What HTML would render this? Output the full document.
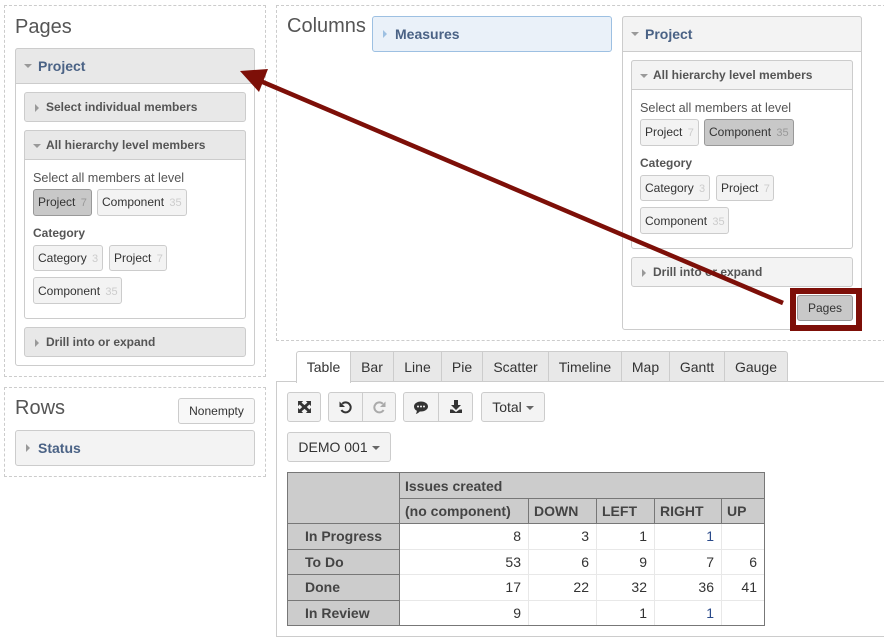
<!DOCTYPE html>
<html><head><meta charset="utf-8"><style>
html,body{margin:0;padding:0;background:#fff}
#p{position:relative;width:884px;height:642px;overflow:hidden;background:#fff;font-family:"Liberation Sans",sans-serif;font-size:12px;color:#333}
#p div{position:absolute;box-sizing:border-box;white-space:nowrap}
.d{border:1px dashed #ccc}
.h{font-size:20px;color:#555;line-height:26px}
.b{border:1px solid #ccc;border-radius:3px;background:#f3f3f3;text-align:left;padding-left:4px;color:#333;font-size:12px;line-height:24px}
.b i{font-style:normal;color:#ccc;font-size:11px;margin-left:2px}
.s{background:#c8c8c8;border-color:#999}
.s i{color:#999}
.box{border:1px solid #ccc;border-radius:3px;background:#fff}
.hd{border:1px solid #ccc;border-radius:3px;background:#e8e8e8;font-weight:bold;color:#555;font-size:12px;line-height:29px;padding-left:21px}
.top{border-radius:3px 3px 0 0}
.lt{background:#f3f3f3}
.blue{font-size:14px;color:#4a6285;padding-left:22px;line-height:35px}
.tr{width:0;height:0;border-style:solid;border-color:transparent}
.dn{border-width:4px 4px 0 4px;border-top-color:#999}
.rt{border-width:4px 0 4px 4px;border-left-color:#999}
.t{font-size:12.65px;color:#555;line-height:16px}
.lb{font-size:12px;font-weight:bold;color:#555;line-height:16px}
.tab{top:351px;height:31px;border:1px solid #ccc;border-left:0;background:#e8e8e8;font-size:14px;color:#333;text-align:center;line-height:31px}
.tb{border:1px solid #ccc;background:#f3f3f3;height:30px;font-size:14px;color:#333;line-height:28px;text-align:center}
.car{display:inline-block;width:0;height:0;border:4px solid transparent;border-top-color:#666;border-bottom:0;vertical-align:2px;margin-left:4px}
.c{background:#ccc;font-weight:bold;font-size:14px;color:#444;line-height:25px;padding-left:5px}
.n{font-size:14px;color:#333;text-align:right;line-height:25px;padding-right:7px}
</style></head><body><div id="p">

<!-- dashed panels -->
<div class="d" style="left:4px;top:5px;width:262px;height:372px"></div>
<div class="d" style="left:4px;top:387px;width:262px;height:90px"></div>
<div class="d" style="left:276px;top:5px;width:620px;height:336px"></div>

<!-- Pages -->
<div class="h" style="left:15px;top:14px">Pages</div>
<div class="box" style="left:15px;top:48px;width:240px;height:318px"></div>
<div class="hd top blue" style="left:15px;top:48px;width:240px;height:36px">Project</div>
<div class="tr dn" style="left:24px;top:64px"></div>
<div class="hd" style="left:24px;top:92px;width:222px;height:30px">Select individual members</div>
<div class="tr rt" style="left:35px;top:104px"></div>
<div class="box" style="left:24px;top:130px;width:222px;height:189px"></div>
<div class="hd top" style="left:24px;top:130px;width:222px;height:30px">All hierarchy level members</div>
<div class="tr dn" style="left:33px;top:144px"></div>
<div class="t" style="left:33px;top:170px">Select all members at level</div>
<div class="b s" style="left:33px;top:189px;width:59px;height:27px">Project <i>7</i></div>
<div class="b" style="left:97px;top:189px;width:90px;height:27px">Component <i>35</i></div>
<div class="lb" style="left:33px;top:225px">Category</div>
<div class="b" style="left:33px;top:245px;width:70px;height:26px">Category <i>3</i></div>
<div class="b" style="left:109px;top:245px;width:58px;height:26px">Project <i>7</i></div>
<div class="b" style="left:33px;top:277px;width:89px;height:27px;line-height:26px">Component <i>35</i></div>
<div class="hd" style="left:24px;top:327px;width:222px;height:30px">Drill into or expand</div>
<div class="tr rt" style="left:35px;top:339px"></div>

<!-- Rows -->
<div class="h" style="left:15px;top:395px">Rows</div>
<div class="b" style="left:178px;top:398px;width:77px;height:26px;text-align:center;padding:0;background:#f8f8f8">Nonempty</div>
<div class="hd lt blue" style="left:15px;top:430px;width:240px;height:36px">Status</div>
<div class="tr rt" style="left:26px;top:444px"></div>

<!-- Columns -->
<div class="h" style="left:287px;top:13px">Columns</div>
<div class="hd blue" style="left:372px;top:16px;width:240px;height:36px;background:#eaf1f9;border-color:#9dc0e2">Measures</div>
<div class="tr rt" style="left:383px;top:30px;border-left-color:#9dc0e2"></div>

<div class="box" style="left:622px;top:16px;width:240px;height:314px"></div>
<div class="hd top lt blue" style="left:622px;top:16px;width:240px;height:36px">Project</div>
<div class="tr dn" style="left:631px;top:32px"></div>
<div class="box" style="left:631px;top:60px;width:222px;height:189px"></div>
<div class="hd top lt" style="left:631px;top:60px;width:222px;height:30px">All hierarchy level members</div>
<div class="tr dn" style="left:640px;top:74px"></div>
<div class="t" style="left:640px;top:100px">Select all members at level</div>
<div class="b" style="left:640px;top:119px;width:59px;height:27px">Project <i>7</i></div>
<div class="b s" style="left:704px;top:119px;width:90px;height:27px">Component <i>35</i></div>
<div class="lb" style="left:640px;top:155px">Category</div>
<div class="b" style="left:640px;top:175px;width:70px;height:26px">Category <i>3</i></div>
<div class="b" style="left:716px;top:175px;width:58px;height:26px">Project <i>7</i></div>
<div class="b" style="left:640px;top:207px;width:89px;height:27px;line-height:26px">Component <i>35</i></div>
<div class="hd lt" style="left:631px;top:257px;width:222px;height:30px">Drill into or expand</div>
<div class="tr rt" style="left:642px;top:269px"></div>
<div class="b s" style="left:797px;top:295px;width:56px;height:26px;text-align:center;padding:0;background:#c8c8c8">Pages</div>
<div style="left:790px;top:288px;width:72px;height:43px;border:6px solid #7d0f08"></div>

<!-- Tabs -->
<div style="left:276px;top:381px;width:620px;height:256px;border:1px solid #ccc;border-right:0"></div>
<div class="tab" style="left:296px;width:55px;background:#fff;border-left:1px solid #ccc;border-bottom:0;border-radius:3px 0 0 0;height:32px">Table</div>
<div class="tab" style="left:351px;width:43px">Bar</div>
<div class="tab" style="left:394px;width:48px">Line</div>
<div class="tab" style="left:442px;width:41px">Pie</div>
<div class="tab" style="left:483px;width:66px">Scatter</div>
<div class="tab" style="left:549px;width:73px">Timeline</div>
<div class="tab" style="left:622px;width:48px">Map</div>
<div class="tab" style="left:670px;width:55px">Gantt</div>
<div class="tab" style="left:725px;width:63px;border-radius:0 3px 0 0">Gauge</div>

<!-- Toolbar -->
<div class="tb" style="left:287px;top:392px;width:34px;border-radius:3px"></div>
<svg style="position:absolute;left:298px;top:401px" width="13" height="12" viewBox="0 0 14 13"><path d="M0 0h5.500L3.800 1.700 7 4.500 10.200 1.700 8.500 0H14v5.500L12.300 3.800 9.500 6.500l2.800 2.700L14 7.500V13H8.500l1.700-1.700L7 8.500 3.800 11.300 5.500 13H0V7.500l1.700 1.700L4.500 6.500 1.700 3.800 0 5.500z" fill="#333"/></svg>
<div class="tb" style="left:328px;top:392px;width:35px;border-radius:3px 0 0 3px"></div>
<svg style="position:absolute;left:339px;top:400px" width="13" height="14" viewBox="0 0 13 14"><path d="M3.200 3.800A5 5 0 1 1 2.400 10" fill="none" stroke="#333" stroke-width="2"/><path d="M0.500 1.500V7H6z" fill="#333"/></svg>
<div class="tb" style="left:362px;top:392px;width:34px;border-radius:0 3px 3px 0;border-left-color:#ccc"></div>
<svg style="position:absolute;left:373px;top:400px" width="13" height="14" viewBox="0 0 13 14"><path d="M9.800 3.800A5 5 0 1 0 10.600 10" fill="none" stroke="#aaa" stroke-width="2"/><path d="M12.500 1.500V7H7z" fill="#aaa"/></svg>
<div class="tb" style="left:403px;top:392px;width:36px;border-radius:3px 0 0 3px"></div>
<svg style="position:absolute;left:413px;top:401px" width="16" height="14" viewBox="0 0 16 14"><path d="M8 0.500C12 0.500 15 2.700 15 5.500S12 10.500 8 10.500L6.800 10.500C5.500 12 3.800 12.800 2.800 13 3.500 12 3.800 11 3.800 9.800 2 8.900 1 7.300 1 5.500 1 2.700 4 0.500 8 0.500z" fill="#333"/><circle cx="5" cy="5.500" r="1" fill="#f3f3f3"/><circle cx="8" cy="5.500" r="1" fill="#f3f3f3"/><circle cx="11" cy="5.500" r="1" fill="#f3f3f3"/></svg>
<div class="tb" style="left:438px;top:392px;width:35px;border-radius:0 3px 3px 0"></div>
<svg style="position:absolute;left:449px;top:400px" width="14" height="14" viewBox="0 0 14 14"><path d="M5 0h4v5h3L7 10 2 5h3z" fill="#333"/><path d="M1 9.500h2.500L7 12l3.500-2.500H13V13H1z" fill="#333"/></svg>
<div class="tb" style="left:481px;top:392px;width:64px;border-radius:3px">Total<span class="car"></span></div>
<div class="tb" style="left:287px;top:432px;width:104px;border-radius:3px">DEMO 001<span class="car"></span></div>

<!-- Table -->
<div class="c" style="left:288px;top:473px;width:111px;height:51px"></div>
<div class="c" style="left:400px;top:473px;width:364px;height:25px;line-height:26px">Issues created</div>
<div class="c" style="left:400px;top:499px;width:128px;height:24px">(no component)</div>
<div class="c" style="left:529px;top:499px;width:67px;height:24px">DOWN</div>
<div class="c" style="left:597px;top:499px;width:57px;height:24px">LEFT</div>
<div class="c" style="left:655px;top:499px;width:66px;height:24px">RIGHT</div>
<div class="c" style="left:722px;top:499px;width:42px;height:24px">UP</div>

<div class="c" style="left:288px;top:524px;width:111px;height:25px;padding-left:17px">In Progress</div>
<div class="c" style="left:288px;top:550px;width:111px;height:24px;padding-left:17px">To Do</div>
<div class="c" style="left:288px;top:575px;width:111px;height:25px;padding-left:17px">Done</div>
<div class="c" style="left:288px;top:601px;width:111px;height:24px;padding-left:17px">In Review</div>

<!-- table lines -->
<div style="left:287px;top:472px;width:478px;height:154px;border:1px solid #777"></div>
<div style="left:399px;top:472px;width:1px;height:153px;background:#777"></div>
<div style="left:399px;top:498px;width:366px;height:1px;background:#777"></div>
<div style="left:287px;top:523px;width:478px;height:1px;background:#777"></div>
<div style="left:287px;top:549px;width:113px;height:1px;background:#777"></div>
<div style="left:287px;top:574px;width:113px;height:1px;background:#777"></div>
<div style="left:287px;top:600px;width:113px;height:1px;background:#777"></div>
<div style="left:528px;top:498px;width:1px;height:25px;background:#777"></div>
<div style="left:596px;top:498px;width:1px;height:25px;background:#777"></div>
<div style="left:654px;top:498px;width:1px;height:25px;background:#777"></div>
<div style="left:721px;top:498px;width:1px;height:25px;background:#777"></div>
<div style="left:400px;top:549px;width:364px;height:1px;background:#e8e8e8"></div>
<div style="left:400px;top:574px;width:364px;height:1px;background:#e8e8e8"></div>
<div style="left:400px;top:600px;width:364px;height:1px;background:#e8e8e8"></div>
<div style="left:528px;top:524px;width:1px;height:101px;background:#e8e8e8"></div>
<div style="left:596px;top:524px;width:1px;height:101px;background:#e8e8e8"></div>
<div style="left:654px;top:524px;width:1px;height:101px;background:#e8e8e8"></div>
<div style="left:721px;top:524px;width:1px;height:101px;background:#e8e8e8"></div>

<div class="n" style="left:400px;top:524px;width:128px">8</div>
<div class="n" style="left:529px;top:524px;width:67px">3</div>
<div class="n" style="left:597px;top:524px;width:57px">1</div>
<div class="n" style="left:655px;top:524px;width:66px;color:#2a4a8a">1</div>
<div class="n" style="left:400px;top:550px;width:128px">53</div>
<div class="n" style="left:529px;top:550px;width:67px">6</div>
<div class="n" style="left:597px;top:550px;width:57px">9</div>
<div class="n" style="left:655px;top:550px;width:66px">7</div>
<div class="n" style="left:722px;top:550px;width:42px">6</div>
<div class="n" style="left:400px;top:575px;width:128px">17</div>
<div class="n" style="left:529px;top:575px;width:67px">22</div>
<div class="n" style="left:597px;top:575px;width:57px">32</div>
<div class="n" style="left:655px;top:575px;width:66px">36</div>
<div class="n" style="left:722px;top:575px;width:42px">41</div>
<div class="n" style="left:400px;top:601px;width:128px">9</div>
<div class="n" style="left:597px;top:601px;width:57px">1</div>
<div class="n" style="left:655px;top:601px;width:66px;color:#2a4a8a">1</div>

<!-- Arrow -->
<svg style="position:absolute;left:0;top:0" width="884" height="642"><line x1="783" y1="303" x2="258" y2="80" stroke="#7d0f08" stroke-width="4.500"/><path d="M240 71L268 69L259 92z" fill="#7d0f08"/></svg>

</div></body></html>
